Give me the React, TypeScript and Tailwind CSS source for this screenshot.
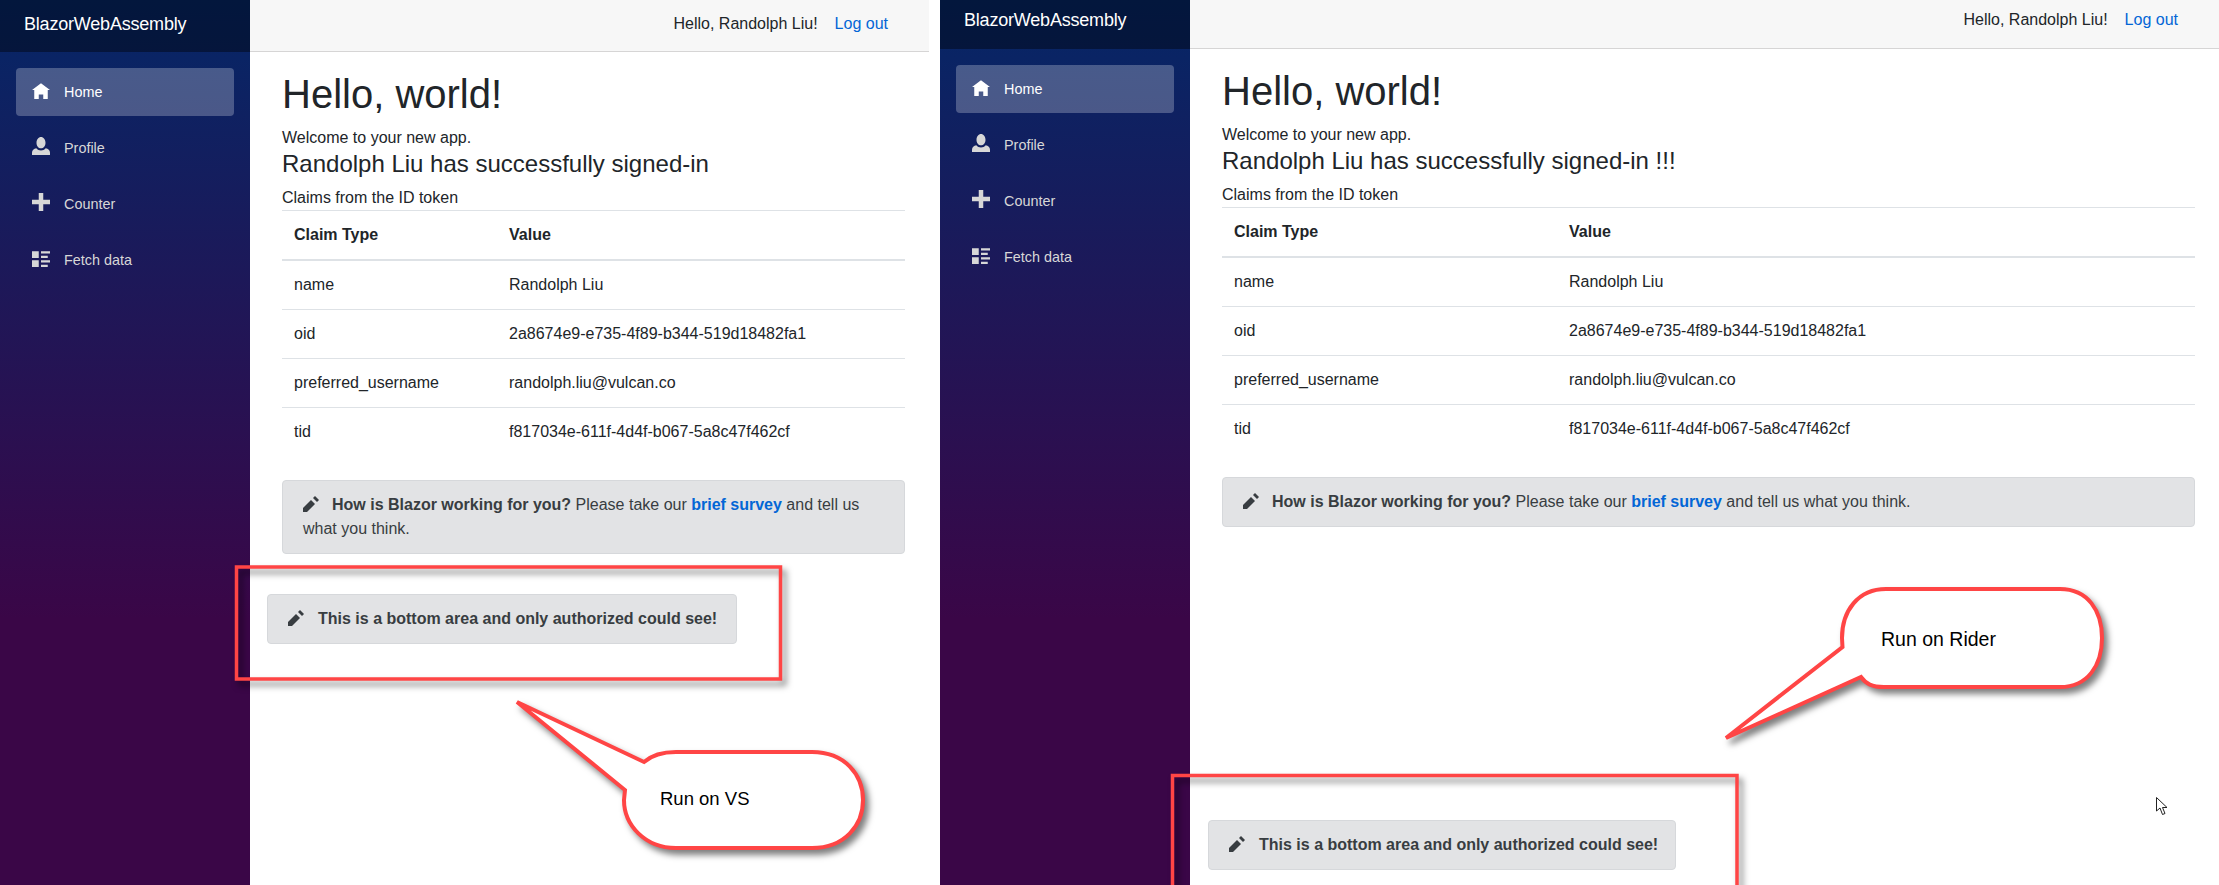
const font = { fontFamily: '"Liberation Sans", Arial, sans-serif' };

const icons = {
  home: "M4 1l-4 3h1v4h2v-2h2v2h2v-4.03l1 .03-4-3z",
  person: "M4 0c-1.1 0-2 1.12-2 2.5s.9 2.5 2 2.5 2-1.12 2-2.5-.9-2.5-2-2.5zm-2.09 5c-1.06.05-1.91.92-1.91 2v1h8v-1c0-1.08-.84-1.95-1.91-2-.54.61-1.28 1-2.09 1-.81 0-1.55-.39-2.09-1z",
  plus: "M3 0v3h-3v2h3v3h2v-3h3v-2h-3v-3h-2z",
  list: "M0 1v3h3v-3h-3zm4 0v1h4v-1h-4zm0 2v1h3v-1h-3zm-4 2v3h3v-3h-3zm4 0v1h4v-1h-4zm0 2v1h3v-1h-3z",
  pencil: "M6 0l-1 1 2 2 1-1-2-2zm-2 2l-4 4v2h2l4-4-2-2z",
};

const Icon = ({ d, className }: { d: string; className: string }) => (
  <svg viewBox="0 0 8 8" className={className} fill="currentColor">
    <path d={d} />
  </svg>
);

const navItems = [
  { name: "Home", icon: icons.home },
  { name: "Profile", icon: icons.person },
  { name: "Counter", icon: icons.plus },
  { name: "Fetch data", icon: icons.list },
];

const claims = [
  ["name", "Randolph Liu"],
  ["oid", "2a8674e9-e735-4f89-b344-519d18482fa1"],
  ["preferred_username", "randolph.liu@vulcan.co"],
  ["tid", "f817034e-611f-4d4f-b067-5a8c47f462cf"],
];

const Sidebar = ({ headerClass }: { headerClass: string }) => (
  <div className="w-[250px] shrink-0 h-full bg-[linear-gradient(180deg,#052767_0%,#3a0647_70%)]">
    <div className={`${headerClass} bg-black/40 pl-6 flex items-center text-white text-[18px] tracking-[-0.2px]`}>BlazorWebAssembly</div>
    <nav className="px-4 pt-4 flex flex-col gap-2">
      {navItems.map((item, i) => (
        <div
          key={item.name}
          className={`h-12 rounded flex items-center pl-4 pt-[2px] text-[14.4px] ${i === 0 ? "bg-white/25 text-white" : "text-[#d7d7d7]"}`}
        >
          <Icon d={item.icon} className="w-[18px] h-[18px] mr-[14px] -mt-[6px]" />
          {item.name}
        </div>
      ))}
    </nav>
  </div>
);

const TopRow = ({ className }: { className: string }) => (
  <div className={`${className} bg-[#f7f7f7] border-b border-[#d6d5d5] flex items-center justify-end pr-[41px]`}>
    <span>Hello, Randolph Liu!</span>
    <span className="ml-[17px] text-[#0366d6]">Log out</span>
  </div>
);

const ClaimsTable = ({ colClass }: { colClass: string }) => (
  <table className="w-full table-fixed border-collapse">
    <thead>
      <tr className="border-t border-b-2 border-[#dee2e6]">
        <th className={`${colClass} p-3 text-left font-bold`}>Claim Type</th>
        <th className="p-3 text-left font-bold">Value</th>
      </tr>
    </thead>
    <tbody>
      {claims.map(([type, value], i) => (
        <tr key={type} className={i > 0 ? "border-t border-[#dee2e6]" : ""}>
          <td className="p-3">{type}</td>
          <td className="p-3">{value}</td>
        </tr>
      ))}
    </tbody>
  </table>
);

const Survey = ({ className }: { className: string }) => (
  <div className={`${className} border border-[#d6d8db] bg-[#e2e3e5] rounded text-[#383d41] px-5 py-3`}>
    <Icon d={icons.pencil} className="inline-block w-4 h-4 mr-[13px] align-[-2px]" />
    <strong className="font-bold">How is Blazor working for you?</strong> Please take our{" "}
    <span className="font-bold text-[#0366d6]">brief survey</span> and tell us what you think.
  </div>
);

const BottomArea = ({ className }: { className: string }) => (
  <div className={`${className} h-[50px] border border-[#d6d8db] bg-[#e2e3e5] rounded text-[#383d41] px-5 py-3 font-bold whitespace-nowrap`}>
    <Icon d={icons.pencil} className="inline-block w-4 h-4 mr-[14px] align-[-2px]" />
    This is a bottom area and only authorized could see!
  </div>
);

const Main = ({ title, colClass, surveyClass, bottomClass }: { title: string; colClass: string; surveyClass: string; bottomClass: string }) => (
  <div className="pl-8 pr-6 pt-[18px]">
    <h1 className="text-[40px] leading-[48px] mb-2">Hello, world!</h1>
    <p className="leading-6">Welcome to your new app.</p>
    <h4 className="text-2xl leading-[28px] mb-2">{title}</h4>
    <p className="leading-6">Claims from the ID token</p>
    <ClaimsTable colClass={colClass} />
    <Survey className={surveyClass} />
    <BottomArea className={bottomClass} />
  </div>
);

const Annotations = () => (
  <svg className="absolute left-0 top-0 w-[2219px] h-[885px] pointer-events-none" viewBox="0 0 2219 885">
    <g className="drop-shadow-[4px_5px_3px_rgba(0,0,0,0.5)]" fill="none" stroke="#ff4545" strokeWidth="3.5">
      <rect x="236.5" y="567" width="544" height="112" />
      <path d="M1172.5 900 V775.5 H1737 V900" />
    </g>
    <g className="drop-shadow-[4px_5px_3px_rgba(0,0,0,0.5)]" fill="#fff" stroke="#ff4545" strokeWidth="4">
      <path d="M517 702 L644 762 C652 755 662 752 676 752 L812 752 C845 752 863 775 863 800 C863 825 845 848 812 848 L676 848 C645 848 624 825 624 800 L625 790 Z" />
      <path d="M1726 738 L1861 677 C1866 684 1872 687 1884 687 L2060 687 C2088 687 2102 665 2102 638 C2102 611 2088 589 2060 589 L1886 589 C1858 589 1842 611 1842 638 L1842.5 647 Z" />
    </g>
    <path d="M2156.5 797.5 V811 L2160 808 L2162.5 814.5 L2165 813.5 L2162.5 807.5 L2167 807.5 Z" fill="#fff" stroke="#222" strokeWidth="1" />
  </svg>
);

export default function App() {
  return (
    <div className="relative w-[2219px] h-[885px] overflow-hidden bg-white text-[#212529] text-base flex" style={font}>
      <div className="w-[929px] h-full flex shrink-0">
        <Sidebar headerClass="h-[52px] pb-1" />
        <div className="flex-1 min-w-0">
          <TopRow className="h-[52px] pb-1" />
          <Main
            title="Randolph Liu has successfully signed-in"
            colClass="w-[215px]"
            surveyClass="mt-6 h-[74px]"
            bottomClass="mt-[40px] -ml-[15px] w-[470px]"
          />
        </div>
      </div>
      <div className="ml-[11px] flex-1 h-full flex min-w-0">
        <Sidebar headerClass="h-[49px] pb-2" />
        <div className="flex-1 min-w-0">
          <TopRow className="h-[49px] pb-2" />
          <Main
            title="Randolph Liu has successfully signed-in !!!"
            colClass="w-[335px]"
            surveyClass="mt-6 h-[50px]"
            bottomClass="mt-[293px] -ml-[14px] w-[468px]"
          />
        </div>
      </div>
      <Annotations />
      <div className="absolute left-[660px] top-[788px] text-[18.5px] leading-[22px] text-black">Run on VS</div>
      <div className="absolute left-[1881px] top-[628px] text-[19.5px] leading-[22px] text-black">Run on Rider</div>
    </div>
  );
}
